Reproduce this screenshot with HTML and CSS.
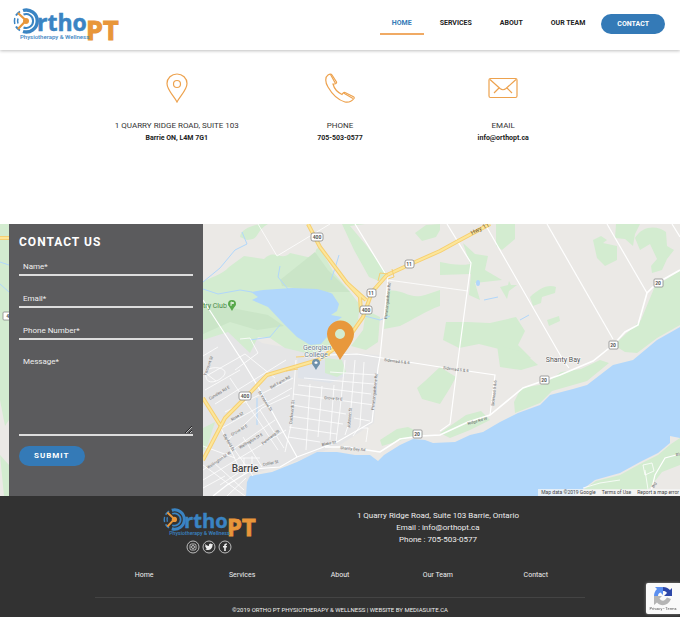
FILE: index.html
```html
<!DOCTYPE html>
<html lang="en">
  <head>
    <meta charset="UTF-8" />
    <meta name="viewport" content="width=device-width, initial-scale=1.0" />
    <title>Contact | Ortho PT</title>
    <link rel="stylesheet" href="styles.css">
  </head>
  <body>
    <header class="header">
      <a class="brand" href="#" aria-label="Ortho PT">
        <svg class="logo" viewBox="0 0 106 34">
          <g id="logo">
            <g fill="none" stroke="#3a84c3">
              <path d="M10 2.500A11 11 0 1 1 10 23.500" stroke-width="3.400" />
              <path d="M10.500 6.500A7 7 0 1 1 10.500 19.500" stroke-width="2" />
              <path d="M7 3.500A11 11 0 0 0 3 7.500M7 22.500A11 11 0 0 1 3 18.500" stroke-width="2" />
              <path d="M1.800 10A13 13 0 0 0 1.800 16M5 10.500A8 8 0 0 0 5 15.500" stroke-width="1.500" />
            </g>
            <path d="M5 5L13 12.500L5 21" fill="none" stroke="#e8963a" stroke-width="2.200" />
            <circle cx="13" cy="13" r="3" fill="#e8963a" />
            <text class="logo-ortho" x="24" y="23">rtho</text>
            <text class="logo-pt" x="73" y="32">PT</text>
            <text class="logo-tag" x="7" y="31">Physiotherapy &amp; Wellness</text>
          </g>
        </svg>
      </a>
      <nav class="nav">
        <a class="active" href="#">HOME</a>
        <a href="#">SERVICES</a>
        <a href="#">ABOUT</a>
        <a href="#">OUR TEAM</a>
        <a class="nav-btn" href="#">CONTACT</a>
      </nav>
    </header>

    <section class="info">
      <div class="info-item">
        <svg viewBox="0 0 30 30">
          <path d="M15 29C12 23 5 17 5 10.500A10 9.500 0 0 1 25 10.500C25 17 18 23 15 29Z" />
          <circle cx="15" cy="11" r="3.500" />
        </svg>
        <p>1 QUARRY RIDGE ROAD, SUITE 103</p>
        <strong>Barrie ON, L4M 7G1</strong>
      </div>
      <div class="info-item">
        <svg viewBox="0 0 30 30">
          <path d="M3 2C0 4 0 9 3 14C7 21 13 27 20 29C25 30 27 28 29 25.500C29.500 24.500 29 24 28 23.500L20 19.500C18.500 19 18 20 17 21.500C12 19 9 15 8 11C9.500 11 12 11 11.500 9L7 2C6 0.500 4.500 1 3 2Z" />
          <path d="M5.500 1.500L10.500 10.500M18.500 20L28 25.500" />
        </svg>
        <p>PHONE</p>
        <strong>705-503-0577</strong>
      </div>
      <div class="info-item">
        <svg viewBox="0 0 30 30">
          <rect x="1" y="5.500" width="28" height="19" rx="1.500" />
          <path d="M2 6.500L12 15.500Q15 18 18 15.500L28 6.500M6 20L11 15M24 20L19 15" />
        </svg>
        <p>EMAIL</p>
        <strong>info@orthopt.ca</strong>
      </div>
    </section>

    <section class="map-section">
      <svg class="map" viewBox="0 224 680 272" preserveAspectRatio="xMidYMid slice" role="img" aria-label="Map of Barrie">
        <rect class="land" x="0" y="224" width="680" height="272" />

        <!-- built up area -->
        <path class="city" d="M203 338L232 324L262 343L300 350L380 355L374 423L340 445L300 460L250 475L246 496H203Z" />
        <path class="campus" d="M298 358L332 360L345 376L330 383L298 378Z" />

        <!-- parks -->
        <g class="park">
          <path d="M0 224H9V420L5 426L0 400Z" />
          <path d="M0 455L9 465V496H4Z" />
          <path d="M203 282C210 277 222 275 229 267L244 256L264 259C275 248 281 262 290 253L312 258C319 255 312 248 320 248L334 273L350 292L360 305L358 320L341 347L310 354L285 348L270 338L258 337L250 353L228 332L203 340Z" />
          <path d="M240 237C241 226 262 223 268 224C254 232 261 239 247 240Z" />
          <path d="M342 224H365L350 226L366 245L387 274L379 281L369 277L354 250Z" />
          <path d="M388 291C402 288 409 300 425 295L440 290V306C425 311 413 320 400 326L384 329Z" />
          <path d="M366 310L380 317L378 342L366 350L351 346L363 330Z" />
          <path d="M415 233L426 225L440 224V230L436 237L422 241Z" />
          <path d="M440 262C451 264 459 266 470 264L463 243L475 254L488 256L485 270L502 280L475 283L480 300L469 295L471 274L440 275Z" />
          <path d="M496 224H515V239L502 250L496 246Z" />
          <path d="M530 297C539 289 547 284 556 287L555 293L542 297L541 303L533 306Z" />
          <path d="M500 287L508 285L509 281L511 285L517 285L509 291L507 299Z" />
          <path d="M547 320L559 316L560 321L549 326Z" />
          <path d="M593 240L601 236L607 240L603 243L617 246L617 260L605 266L597 258Z" />
          <path d="M616 224H640L635 234L633 246L625 239L615 238Z" />
          <path d="M635 238C643 224 659 226 666 232L667 246L674 250L667 259L662 270L652 273L651 266L657 259L650 244L640 250Z" />
          <path d="M446 322L467 322L490 323L516 317L525 331L518 345L531 358L518 360L499 349L479 344L459 348L443 340Z" />
          <path d="M497 345L523 352L538 365L521 370L500 367Z" />
          <path d="M680 271L655 286L641 320L614 345L625 352L637 353L657 338L680 325Z" />
          <path d="M440 367L456 377L450 388L440 404L422 399L417 388L425 381Z" />
          <path d="M380 440L397 429L408 427L423 434L402 440L382 446Z" />
          <path d="M440 433L466 415L481 411L490 420L470 430L450 438Z" />
          <path d="M514 402L521 388L545 384L561 372L581 369L600 360L609 363L587 381L552 391L540 403L515 413Z" />
          <path d="M325 358L342 360L346 372L337 377L325 373Z" />
          <path d="M203 428L215 422L208 444L203 452Z" />
          <path d="M680 438L671 444L658 455L640 464L620 475L596 481L583 490H648L662 472L680 465Z" />
        </g>
        <path class="park-dark" d="M280 280L315 252L328 270L350 292H318L282 286ZM203 302L232 308L268 315L284 326L257 330L230 322L203 334Z" />

        <!-- water -->
        <g class="water">
          <path d="M251 292L263 290L292 288L317 289C328 292 333 293 333 295L339 304L337 311L331 315L342 317L334 323L327 337L321 344L310 345L297 337L283 323L268 307L252 300L258 297Z" />
          <path d="M246 496L247 482L250 476L272 472L297 462L317 452L337 452L355 455L370 455L378 461L384 455L400 445L413 439L425 440L433 443L455 442L470 435L483 432L500 422L518 413L540 405L550 395L573 389L587 385L600 375L613 365L633 360L645 350L657 340L673 331L680 327V438L670 436V443L658 453L640 462L620 473L595 480L583 489L575 496Z" />
          <ellipse cx="478" cy="283" rx="2" ry="3" />
        </g>
        <path class="stream" d="M203 289L218 294L240 290L252 292M203 282L220 268L235 250L247 244L242 232M288 289L278 277L280 266M339 255L336 265L331 280M250 340L270 337L280 325M361 315L380 320L390 316M484 300L498 297M520 320L529 315M0 262L9 265M0 284L9 292M257 398V425" />

        <!-- small streets -->
        <g class="street thin">
          <path d="M258 224L277 256L330 224M388 280L468 291M230 378L278 450M208 375L245 354L275 378M205 390L240 370M215 404L286 360M225 412L293 378M222 428L292 388M228 440L262 408L290 395M203 470L275 420M203 480L286 430M232 446L253 476M243 437L262 467M216 417L240 470M260 410L284 448" />
          <path d="M296 360L291 425L285 452M310 384L306 450M322 386L318 437M334 385L330 440M345 360L340 410L336 442M355 360L350 420L345 435M364 362L360 426L353 436M293 394L374 405M292 405L346 414M290 416L343 424M289 427L337 434M288 437L320 442M304 378L374 384M330 372L376 375M298 385L371 394M354 418L370 421M362 428L368 428L366 442" />
          <path d="M203 446L235 458M238 458H260M240 465H258M244 458V474M252 456V470M203 465L245 496M213 462L244 490M220 485L238 473M227 496L246 478M203 488L225 476M203 356L218 347M204 372L216 381M240 339L250 338L258 353L235 370M206 377C202 365 224 366 225 372S208 388 206 377M620 480L600 483L583 488M643 465L652 463L654 471L645 475ZM645 470L649 496" />
        </g>
        <g class="street">
          <path d="M203 300L245 365L263 395L297 457" />
          <path d="M355 224L388 278L380 357L378 368L372 422L337 442L297 457L280 467L253 469L227 485L213 496" />
          <path d="M447 224L471 263L458 360L450 424L440 431" />
          <path d="M485 224L563 360L569 368" />
          <path d="M547 224L613 339" />
          <path d="M607 224L647 293" />
          <path d="M672 224L680 237" />
          <path d="M330 355L357 354L440 367L495 375L490 415" />
          <path d="M680 454L665 458L655 475L650 496" />
        </g>
        <path class="street wide" d="M680 270L657 283L647 293L638 325L625 332L613 345L593 361L560 375L523 388L490 415L468 422L440 435L420 436L400 439L380 452L347 447L325 447" />

        <!-- highways -->
        <path class="hwy-edge" d="M308 224L320 247L347 283L360 297L361 312M347 283L366 300M490 224L460 240L440 251L413 263L387 275L372 292L363 317L347 340L318 360L267 375L250 393L225 418L203 460M203 398L220 425M0 238H9" />
        <path class="hwy" d="M308 224L320 247L347 283L360 297L361 312M347 283L366 300M490 224L460 240L440 251L413 263L387 275L372 292L363 317L347 340L318 360L267 375L250 393L225 418L203 460M203 398L220 425M0 238H9" />
        <path class="ramp" d="M378 281L380 273L388 274M388 279L394 277L392 269M296 357L330 355M286 371L298 369" />

        <!-- route shields -->
        <g class="shield">
          <rect x="311" y="233" width="12" height="8" rx="2" /><text x="317" y="239">400</text>
          <rect x="360" y="306" width="12" height="8" rx="2" /><text x="366" y="312">400</text>
          <rect x="239" y="392" width="12" height="8" rx="2" /><text x="245" y="398">400</text>
          <rect x="405" y="260" width="9" height="8" rx="2" /><text x="409" y="266">11</text>
          <rect x="367" y="289" width="9" height="8" rx="2" /><text x="371" y="295">11</text>
          <rect x="654" y="279" width="9" height="8" rx="1" /><text x="658" y="285">20</text>
          <rect x="609" y="341" width="9" height="8" rx="1" /><text x="613" y="347">20</text>
          <rect x="540" y="376" width="9" height="8" rx="1" /><text x="544" y="382">20</text>
          <rect x="413" y="430" width="9" height="8" rx="1" /><text x="417" y="436">20</text>
          <rect x="3" y="312" width="12" height="8" rx="1" /><text x="9" y="318">43</text>
        </g>

        <!-- labels -->
        <g class="road-name">
          <text transform="translate(387 319) rotate(-84)">Penetanguishene Rd</text>
          <text transform="translate(374 410) rotate(-84)">Penetanguishene Rd</text>
          <text transform="translate(292 424) rotate(-84)">Duckworth St</text>
          <text transform="translate(350 428) rotate(-85)">Johnson St</text>
          <text transform="translate(494 406) rotate(-84)">Sideroad 5 &amp; 6</text>
          <text transform="translate(384 361) rotate(7)">Sideroad 5 &amp; 6</text>
          <text transform="translate(443 369) rotate(7)">Sideroad 5 &amp; 6</text>
          <text transform="translate(468 425) rotate(-16)">Ridge Rd W</text>
          <text transform="translate(340 449) rotate(5)">Shanty Bay Rd</text>
          <text transform="translate(322 446) rotate(-11)">Blake St</text>
          <text transform="translate(324 399) rotate(5)">Grove St E</text>
          <text transform="translate(271 389) rotate(-30)">Bell Farm Rd</text>
          <text transform="translate(210 400) rotate(-31)">Cundles Rd E</text>
          <text transform="translate(232 421) rotate(-31)">Rose St</text>
          <text transform="translate(232 436) rotate(-31)">Grove St E</text>
          <text transform="translate(240 449) rotate(-31)">Wellington St E</text>
          <text transform="translate(208 469) rotate(-34)">Wellington St W</text>
          <text transform="translate(263 445) rotate(-39)">Penetang St</text>
          <text transform="translate(263 466) rotate(-12)">Collier St</text>
          <text transform="translate(258 392) rotate(58)">St Vincent St</text>
          <text transform="translate(223 435) rotate(60)">Bayfield St</text>
          <text transform="translate(206 376) rotate(-70)">Viscount St</text>
          <text transform="translate(676 456) rotate(-10)">Big Bay</text>
          <text transform="translate(654 488) rotate(-64)">Big</text>
        </g>
        <text class="hwy-name" transform="translate(472 235) rotate(-27)">Hwy 11</text>
        <text class="poi-green" x="203" y="308">try Club</text>
        <text class="poi" x="317" y="350">Georgian</text>
        <text class="poi" x="316" y="357">College</text>
        <text class="town" x="563" y="362">Shanty Bay</text>
        <text class="big-town" x="245" y="472">Barrie</text>

        <!-- markers -->
        <path d="M232 311C230 307 228 306 228 304A4 4 0 0 1 236 304C236 306 234 307 232 311Z" fill="#58a94b" />
        <path d="M231 302V306M231 302L234 303L231 304" stroke="#fff" fill="none" stroke-width="0.800" />
        <path d="M316 370C314 366 312 365 312 363A4 4 0 0 1 320 363C320 365 318 366 316 370Z" fill="#6f91aa" />
        <path d="M314 363L316 361L318 363L316 364Z" fill="#fff" />
        <path fill="#e8983c" fill-rule="evenodd" d="M340 360C336 351 327 343 327 334A13.500 13.500 0 0 1 354 334C354 343 345 351 340 360ZM340 329A5 5 0 1 0 340 339A5 5 0 1 0 340 329Z" />
      </svg>

      <form class="contact-form">
        <h2>CONTACT US</h2>
        <input type="text" aria-label="Name" placeholder="Name*" />
        <input type="email" aria-label="Email" placeholder="Email*" />
        <input type="tel" aria-label="Phone Number" placeholder="Phone Number*" />
        <textarea aria-label="Message" placeholder="Message*"></textarea>
        <button type="submit">SUBMIT</button>
      </form>

      <div class="map-credit">
        <span>Map data ©2019 Google</span>
        <a href="#">Terms of Use</a>
        <a href="#">Report a map error</a>
      </div>
    </section>

    <footer class="footer">
      <div class="footer-top">
        <div class="footer-brand">
          <svg class="logo" viewBox="0 0 106 34"><use href="#logo" /></svg>
          <div class="social">
            <a href="#" aria-label="Instagram">
              <svg viewBox="0 0 14 14"><circle cx="7" cy="7" r="6" /><rect x="4" y="4" width="6" height="6" rx="1.500" /><circle cx="7" cy="7" r="1.500" /></svg>
            </a>
            <a href="#" aria-label="Twitter">
              <svg viewBox="0 0 14 14"><circle cx="7" cy="7" r="6" /><path class="solid" d="M3 4Q5 6 7 6C6.500 3.500 9 3 10 4.300L11 4L10.500 5.200C10.500 9 7 11 3.200 9.700L5 9L3.700 8L4 7.500L3 6.200L3.500 6Z" /></svg>
            </a>
            <a href="#" aria-label="Facebook">
              <svg viewBox="0 0 14 14"><circle cx="7" cy="7" r="6" /><path class="solid" d="M6.200 11V7.500H5V6H6.200C6 4 6.700 3.200 9 3.500V4.800C8 4.700 7.800 5 7.800 6H9L8.800 7.500H7.800V11Z" /></svg>
            </a>
          </div>
        </div>
        <address>
          1 Quarry Ridge Road, Suite 103 Barrie, Ontario<br />
          Email : info@orthopt.ca<br />
          Phone : 705-503-0577
        </address>
      </div>
      <nav class="footer-nav">
        <a href="#">Home</a>
        <a href="#">Services</a>
        <a href="#">About</a>
        <a href="#">Our Team</a>
        <a href="#">Contact</a>
      </nav>
      <p class="copyright">©2019 ORTHO PT PHYSIOTHERAPY &amp; WELLNESS | WEBSITE BY MEDIASUITE.CA</p>
    </footer>

    <div class="recaptcha">
      <svg viewBox="0 0 20 20">
        <path fill="#2d47a8" d="M10 1C13 1 15 2 17 4L19 2V10H11L14 7C13 5.500 12 5 10 5Z" />
        <path fill="#5b8ff0" d="M1 10C1 7 2 5 4 3L2 1H10V9L7.500 6.500C6 7 5 8 5 10Z" />
        <path fill="#b5b5b5" d="M1 10H9L6.500 12.500C9 16 12 15 14 11.500L18 13C15 20 8 21 4 16.500L1 19Z" />
      </svg>
      <span>Privacy - Terms</span>
    </div>
  </body>
</html>
```
FILE: styles.css
```css
* {
  box-sizing: border-box;
}
body {
  margin: 0;
  font-family: Roboto, "Liberation Sans", sans-serif;
  font-size: 8px;
  line-height: 12px;
  color: #333;
  background: #fff;
}
a {
  color: inherit;
  text-decoration: none;
}
.logo {
  overflow: visible;
}
.logo-ortho,
.logo-pt {
  font-family: "Open Sans", sans-serif;
  font-weight: 700;
}
.logo-ortho {
  font-size: 23px;
  fill: #3a84c3;
  stroke: #3a84c3;
  stroke-width: 0.5px;
}
.logo-pt {
  font-size: 27px;
  fill: #e8963a;
  stroke: #e8963a;
  stroke-width: 1px;
}
.logo-tag {
  font-size: 6px;
  font-weight: 500;
  fill: #3a84c3;
}

/* header */
.header {
  display: flex;
  justify-content: space-between;
  align-items: center;
  height: 50px;
  padding: 0 15px 0 13px;
  box-shadow: 0 1px 3px rgba(0, 0, 0, 0.25);
}
.brand {
  display: flex;
}
.brand .logo {
  width: 106px;
  height: 34px;
}
.nav {
  display: flex;
  align-items: center;
  gap: 4px;
  padding-bottom: 3px;
  font-size: 7px;
  font-weight: 700;
  color: #222;
}
.nav a {
  padding: 4px 12px;
  border-bottom: 2px solid transparent;
}
.nav .active {
  color: #347ab7;
  border-color: #f0aa64;
}
.nav .nav-btn {
  padding: 4px 16px;
  border: 0;
  border-radius: 10px;
  background: #347ab7;
  color: #fff;
}

/* address, phone, email */
.info {
  display: grid;
  grid-template-columns: repeat(3, 1fr);
  width: 72%;
  margin: 0 auto;
  padding: 23px 0 80px;
  text-align: center;
}
.info svg {
  display: block;
  width: 30px;
  height: 30px;
  margin: 0 auto 17px;
  fill: none;
  stroke: #eda24e;
  stroke-width: 1.2;
}
.info p {
  margin: 0;
}
.info strong {
  font-size: 7px;
  color: #222;
}

/* map + form */
.map-section {
  position: relative;
  padding-left: 9px;
}
.map {
  position: absolute;
  top: 0;
  left: 0;
  width: 100%;
  height: 100%;
  display: block;
}
.land {
  fill: #ebe9e6;
}
.city {
  fill: #e5e5e6;
}
.campus {
  fill: #dfe3e9;
}
.park {
  fill: #d3ecd0;
}
.park-dark {
  fill: #cae5c7;
}
.water {
  fill: #b1d7fb;
}
.stream {
  fill: none;
  stroke: #b1d7fb;
}
.street {
  fill: none;
  stroke: #fff;
  stroke-width: 1.2;
}
.street.thin {
  stroke-width: 0.8;
}
.street.wide {
  stroke-width: 1.6;
}
.hwy,
.hwy-edge,
.ramp {
  fill: none;
  stroke: #f6cf72;
  stroke-width: 4;
  stroke-linejoin: round;
}
.hwy {
  stroke: #fce69a;
  stroke-width: 2;
}
.ramp {
  stroke-width: 1;
}
.shield rect {
  fill: #fff;
  stroke: #888;
  stroke-width: 0.8;
}
.shield text {
  font-size: 5px;
  font-weight: 700;
  text-anchor: middle;
  fill: #555;
}
.road-name {
  font-size: 4px;
  fill: #666;
}
.hwy-name {
  font-size: 6px;
  fill: #6b5535;
}
.poi-green {
  font-size: 7px;
  fill: #4a8a4a;
}
.poi,
.town {
  font-size: 7px;
  text-anchor: middle;
  fill: #667a8c;
  stroke: #fff;
  stroke-width: 1px;
  paint-order: stroke;
}
.town {
  fill: #555;
}
.big-town {
  font-size: 10px;
  font-weight: 500;
  text-anchor: middle;
  fill: #444;
  stroke: #fff;
  stroke-width: 1px;
  paint-order: stroke;
}
.contact-form {
  position: relative;
  width: 194px;
  padding: 10px 10px 30px;
  background: #5b5b5d;
  color: #fff;
}
.contact-form h2 {
  margin: 0 0 6px;
  font-size: 12px;
  line-height: 16px;
  letter-spacing: 1px;
}
.contact-form input,
.contact-form textarea {
  display: block;
  width: 100%;
  height: 20px;
  margin: 0 0 12px;
  padding: 2px 4px 0;
  border: 0;
  border-bottom: 2px solid #ddd;
  border-radius: 0;
  outline: 0;
  background: transparent;
  color: #fff;
  font: inherit;
}
.contact-form textarea {
  height: 84px;
  padding-top: 4px;
  margin-bottom: 10px;
}
.contact-form ::placeholder {
  color: #eee;
}
.contact-form button {
  display: block;
  height: 20px;
  padding: 0 15px;
  border: 0;
  border-radius: 10px;
  background: #347ab7;
  color: #fff;
  font: inherit;
  font-weight: 700;
  letter-spacing: 1px;
}
.map-credit {
  position: absolute;
  right: 0;
  bottom: 0;
  display: flex;
  gap: 6px;
  padding: 0 1px 0 3px;
  background: rgba(245, 245, 245, 0.75);
  font-size: 5px;
  line-height: 7px;
  color: #444;
}

/* footer */
.footer {
  padding: 12px 14% 0;
  background: #323232;
  color: #eee;
  text-align: center;
}
.footer-top {
  display: grid;
  grid-template-columns: 7fr 7fr 1fr;
}
.footer-brand .logo {
  display: block;
  width: 93px;
  height: 30px;
  margin: 0 auto 2px;
}
.social {
  display: flex;
  justify-content: center;
  gap: 2px;
}
.social a {
  width: 14px;
  height: 14px;
}
.social svg {
  display: block;
  fill: none;
  stroke: #ddd;
  stroke-width: 0.8;
}
.social .solid {
  fill: #eee;
  stroke: none;
}
address {
  padding-top: 2px;
  font-style: normal;
}
.footer-nav {
  display: grid;
  grid-template-columns: repeat(5, 1fr);
  padding: 15px 0 16px;
  border-bottom: 1px solid #444;
  font-size: 7px;
}
.copyright {
  margin: 0;
  padding: 6px 0 1px;
  font-size: 6px;
}

.recaptcha {
  position: fixed;
  right: 0;
  bottom: 3px;
  width: 34px;
  height: 31px;
  padding-top: 3px;
  border-radius: 2px 0 0 2px;
  background: #fafafa;
  box-shadow: 0 0 3px #888;
  color: #555;
  font-size: 4px;
  line-height: 6px;
  text-align: center;
}
.recaptcha svg {
  display: block;
  width: 20px;
  height: 20px;
  margin: 0 auto;
}
```
